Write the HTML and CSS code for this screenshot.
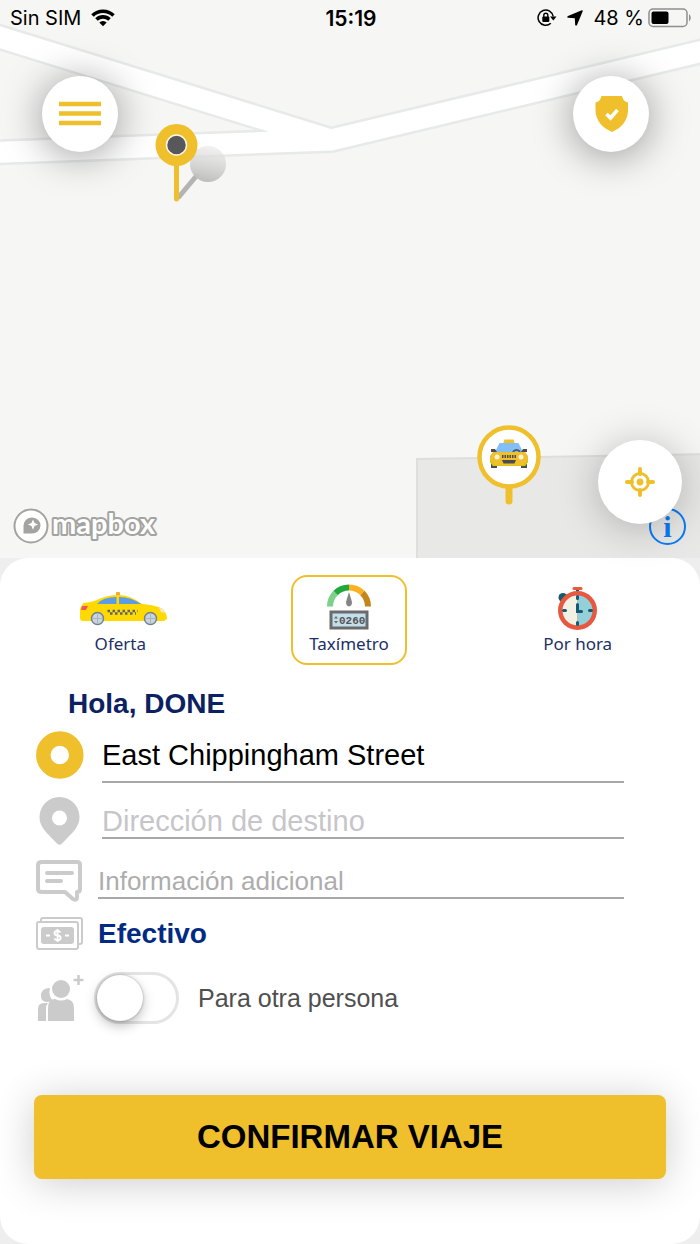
FILE: index.html
```html
<!DOCTYPE html>
<html lang="es">
<head>
    <meta charset="UTF-8">
    <meta name="viewport" content="width=device-width, initial-scale=1.0">
    <title>Confirmar viaje</title>
    <link rel="stylesheet" href="styles.css">
</head>
<body>
    <div class="app">
        <section class="map">
            <svg class="map-canvas" viewBox="0 0 700 558" preserveAspectRatio="xMidYMid slice" aria-hidden="true">
                <defs>
                    <linearGradient id="pinShadow" x1="0.6" y1="0" x2="0.4" y2="1">
                        <stop offset="0" stop-color="#e8e8e7" stop-opacity="0.6"/>
                        <stop offset="1" stop-color="#bdbdbd"/>
                    </linearGradient>
                </defs>
                <path d="M417 570V459L720 454V570Z" fill="#e8e8e7" stroke="#dedede" stroke-width="2"/>

                <!-- roads -->
                <g fill="none" stroke-linejoin="round">
                    <path d="M-20 153L331 140M-20 31L331 140L720 47" stroke="#e6eae8" stroke-width="26"/>
                    <path d="M-20 153L331 140M-20 31L331 140L720 47" stroke="#ffffff" stroke-width="21"/>
                </g>

                <!-- pickup pin -->
                <path d="M178 198L198 174" stroke="#b4b4b4" stroke-width="5"/>
                <circle cx="208" cy="164" r="18" fill="url(#pinShadow)"/>
                <path d="M176.500 160V199" stroke="#efbf2c" stroke-width="5" stroke-linecap="round"/>
                <circle cx="176.500" cy="145" r="21" fill="#efbf2c"/>
                <circle cx="176.500" cy="145" r="10" fill="#58585c" stroke="#fff8e6" stroke-width="1.500"/>

                <!-- taxi pin -->
                <path d="M509 486V501" stroke="#efbf2c" stroke-width="7" stroke-linecap="round"/>
                <circle cx="509" cy="457" r="29.500" fill="#fff" stroke="#efbf2c" stroke-width="4.500"/>
                <g transform="translate(490 438)">
                    <path d="M13 6L14.500 1.500H23.500L25 6Z" fill="#efbf2c"/>
                    <path d="M4 16L9.500 5H28.500L34 16Z" fill="#82bff7"/>
                    <path d="M23 14a4 4 0 0 1 7 0" fill="none" stroke="#46545f" stroke-width="1.800"/>
                    <path d="M1 11h4l2 3H1ZM37 11h-4l-2 3h6Z" fill="#4b4c52"/>
                    <path d="M1 21h6v9H1ZM31 21h6v9h-6Z" fill="#4b4c52"/>
                    <path d="M3 14H35L38 18V24L35 28H3L0 24V18Z" fill="#efbf2c"/>
                    <path d="M0 22L5 27H33L38 22V24L35 28H3L0 24Z" fill="#d6c60f"/>
                    <path d="M12 18.500H26" stroke="#4b4c52" stroke-width="3" stroke-dasharray="1.500 1"/>
                    <path d="M12 22H26L24.500 25.500H13.500Z" fill="#4b4c52"/>
                    <circle cx="7" cy="19" r="2.500" fill="#fff3dc"/>
                    <circle cx="31" cy="19" r="2.500" fill="#fff3dc"/>
                </g>
            </svg>

            <header class="status-bar">
                <div class="status-left">
                    <span>Sin SIM</span>
                    <svg width="24" height="18" viewBox="0 0 24 18">
                        <g fill="none" stroke="#000" stroke-width="3.600">
                            <path d="M1.500 6.500a15 15 0 0 1 21 0"/>
                            <path d="M5.500 10.500a9.300 9.300 0 0 1 13 0"/>
                        </g>
                        <path d="M8.300 13.500a5.300 5.300 0 0 1 7.400 0L12 17.200Z"/>
                    </svg>
                </div>
                <time class="status-time">15:19</time>
                <div class="status-right">
                    <svg width="20" height="18" viewBox="0 0 20 18">
                        <path d="M16.200 7.500a7.600 7.600 0 1 0-2.400 6.800" fill="none" stroke="#000" stroke-width="1.500"/>
                        <path d="M13 7.500h6.500l-3.200 4Z"/>
                        <rect x="5.300" y="7.500" width="7" height="5.500" rx="1"/>
                        <path d="M6.800 8V6.200a2 2 0 0 1 4 0V8" fill="none" stroke="#000" stroke-width="1.400"/>
                    </svg>
                    <svg width="16" height="16" viewBox="0 0 16 16"><path d="M14.800 0.300Q16 0 15.700 1.200L10 15Q9 16.500 8.200 15L7.800 8.200L1 7.800Q-0.500 7 1 6Z"/></svg>
                    <span>48 %</span>
                    <svg width="44" height="20" viewBox="0 0 44 20">
                        <rect x="1" y="1" width="38" height="17.500" rx="4" fill="none" stroke="#8e8e8c" stroke-width="1.500"/>
                        <rect x="3.500" y="3.500" width="17" height="12.500" rx="2"/>
                        <path d="M41 6q3.500 3.500 0 7.500Z" fill="#8e8e8c"/>
                    </svg>
                </div>
            </header>

            <div class="map-top">
                <button class="round-btn" type="button" aria-label="Menú">
                    <svg width="42" height="26" viewBox="0 0 42 26"><path d="M0 3h42M0 12.500h42M0 22h42" stroke="#efbf2c" stroke-width="4.500"/></svg>
                </button>
                <button class="round-btn" type="button" aria-label="Seguridad">
                    <svg width="34" height="36" viewBox="0 0 34 36">
                        <path d="M7.500 0H28Q29 5.500 34 6.500V14C34 25 27 32 18 36C9 32 1.500 25 1.500 14V6.500Q6.500 5.500 7.500 0Z" fill="#efbf2c"/>
                        <path d="M12.500 18L16.500 22L23.500 14" fill="none" stroke="#fff" stroke-width="3.600"/>
                    </svg>
                </button>
            </div>

            <div class="map-bottom">
                <svg class="mapbox-logo" width="160" height="46" viewBox="0 -8 160 46" role="img" aria-label="mapbox">
                    <circle cx="18" cy="19" r="16.500" fill="#fff" stroke="#a3a3a1" stroke-width="2"/>
                    <path d="M10.500 26.500V18.500a8.500 8 0 1 1 8 8Z" fill="#a3a3a1"/>
                    <path d="M20 12.500l1.500 3.600l3.600 1.500l-3.600 1.500l-1.500 3.600l-1.500-3.600l-3.600-1.500l3.600-1.500Z" fill="#fff"/>
                    <text class="mapbox-word" x="39" y="27">mapbox</text>
                </svg>
                <button class="info-btn" type="button" aria-label="Información del mapa">i</button>
                <button class="round-btn locate-btn" type="button" aria-label="Mi ubicación">
                    <svg width="30" height="30" viewBox="0 0 30 30" fill="none" stroke="#efbf2c">
                        <circle cx="15" cy="15" r="8.500" stroke-width="3"/>
                        <path d="M15 2v5M15 23v5M2 15h5M23 15h5" stroke-width="4" stroke-linecap="round"/>
                        <circle cx="15" cy="15" r="3.400" fill="#efbf2c" stroke="none"/>
                    </svg>
                </button>
            </div>
        </section>

        <main class="sheet">
            <nav class="services">
                <button class="service" type="button">
                    <svg width="96" height="46" viewBox="-8 0 96 46">
                        <rect x="36" y="8" width="4" height="5" rx="1" fill="#f6a735"/>
                        <path d="M0 34V25L3 19Q10 19 17 16Q27 11 39 11Q50 11 62 20Q76 21 83 25Q87 30 87 35L84 37H3Q0 37 0 34Z" fill="#ffd900"/>
                        <path d="M17 20Q23 13 36.500 13V20ZM39 13Q51 13 61 20H39Z" fill="#5c9ce6"/>
                        <path d="M2 22h6l-2 4H1Z" fill="#f0575a"/>
                        <path d="M79 24q5 0 6 5l-4-1Z" fill="#f3eaca"/>
                        <path d="M27.500 27H58M30 29.500H56" stroke="#5d6478" stroke-width="2.500" stroke-dasharray="2.500 2.500"/>
                        <g fill="#c9d5de" stroke="#74818c" stroke-width="1.500">
                            <circle cx="17.500" cy="34.500" r="6"/>
                            <circle cx="70.500" cy="34.500" r="6"/>
                        </g>
                        <path d="M17.500 30v9M13 34.500h9M70.500 30v9M66 34.500h9" stroke="#a9b6c0"/>
                    </svg>
                    <span>Oferta</span>
                </button>
                <button class="service active" type="button">
                    <svg width="46" height="46" viewBox="0 0 46 46">
                        <g fill="none" stroke-width="6">
                            <path d="M4 22.500A19 19 0 0 1 9.600 9" stroke="#7fd08a"/>
                            <path d="M9.600 9A19 19 0 0 1 23 3.500" stroke="#20a83a"/>
                            <path d="M23 3.500A19 19 0 0 1 36.400 9" stroke="#fdb022"/>
                            <path d="M36.400 9A19 19 0 0 1 42 22.500" stroke="#c28718"/>
                        </g>
                        <path d="M23 8L26 18Q26 22 23 22.500Q20 22 20 18Z" fill="#858585"/>
                        <rect x="5" y="28" width="36" height="16" fill="#c3dfec" stroke="#6b6b6b" stroke-width="3"/>
                        <path d="M8 34.500l2-2.500l2 2.500ZM8 37l2 2.500l2-2.500Z" fill="#6b6b6b"/>
                        <text class="meter-digits" x="13" y="40">0260</text>
                    </svg>
                    <span>Taxímetro</span>
                </button>
                <button class="service" type="button">
                    <svg width="44" height="46" viewBox="0 0 44 46">
                        <circle cx="7" cy="13.500" r="4.500" fill="#155b70"/>
                        <path d="M21.500 4v5" stroke="#155b70" stroke-width="3"/>
                        <path d="M18 4.500h7" stroke="#e85840" stroke-width="3" stroke-linecap="round"/>
                        <circle cx="21.500" cy="26.500" r="19.500" fill="#e85840"/>
                        <path d="M21.500 11.500a15 15 0 0 0 0 30Z" fill="#f3f0e4"/>
                        <path d="M21.500 11.500a15 15 0 0 1 0 30Z" fill="#93d0d9"/>
                        <path d="M21.500 12.500v2M21.500 38.500v2M7.500 26.500h2M33.500 26.500h2M21.500 20.500v7h4" fill="none" stroke="#155b70" stroke-width="3" stroke-linecap="round"/>
                    </svg>
                    <span>Por hora</span>
                </button>
            </nav>

            <form class="trip-form">
                <h1 class="greeting">Hola, DONE</h1>

                <div class="row row-origin">
                    <label class="row-icon" for="origin" aria-label="Origen">
                        <svg width="48" height="48" viewBox="0 0 48 48"><circle cx="23.800" cy="24" r="16.500" fill="#fff" stroke="#efbf2c" stroke-width="14.500"/></svg>
                    </label>
                    <input class="field address" id="origin" type="text" value="East Chippingham Street">
                </div>

                <div class="row row-destination">
                    <label class="row-icon" for="destination" aria-label="Destino">
                        <svg width="42" height="48" viewBox="0 0 42 48">
                            <path d="M20.500 0A20 20 0 0 1 40.500 20.500C40.500 30 33 36 23 46.500Q20.500 49 18 46.500C8 36 0.500 30 0.500 20.500A20 20 0 0 1 20.500 0Z" fill="#cbcbcb"/>
                            <circle cx="20.500" cy="21" r="7.500" fill="#fff"/>
                        </svg>
                    </label>
                    <input class="field address" id="destination" type="text" placeholder="Dirección de destino">
                </div>

                <div class="row row-notes">
                    <label class="row-icon" for="notes" aria-label="Información adicional">
                        <svg width="48" height="42" viewBox="0 0 48 42" fill="none" stroke="#cbcbcb" stroke-width="4" stroke-linecap="round" stroke-linejoin="round">
                            <path d="M6 2H41Q44 2 44 5V29Q44 32 41 32V37Q41 41 37 39L29 32H6Q2 32 2 29V5Q2 2 6 2Z"/>
                            <path d="M11 13h25M11 21h14"/>
                        </svg>
                    </label>
                    <input class="field" id="notes" type="text" placeholder="Información adicional">
                </div>

                <div class="row row-payment">
                    <span class="row-icon">
                        <svg width="48" height="34" viewBox="0 0 48 34">
                            <path d="M5 5V3Q5 1 7 1H44Q46 1 46 3V25Q46 27 44 27H42" fill="none" stroke="#cbcbcb" stroke-width="2"/>
                            <rect x="1" y="5" width="41" height="27" rx="2" fill="#fff" stroke="#cbcbcb" stroke-width="2"/>
                            <rect x="5" y="10" width="33" height="17" rx="3" fill="#cbcbcb"/>
                            <path d="M10 18.500h4M29 18.500h4" stroke="#fff" stroke-width="2"/>
                            <path d="M24.500 15.500q-1-1.500-3-1.500q-3 0-3 2.200q0 2 3 2.300q3.200.3 3.200 2.500q0 2.200-3.200 2.200q-2.200 0-3.200-1.600M21.500 12v13" fill="none" stroke="#fff" stroke-width="1.800"/>
                        </svg>
                    </span>
                    <button class="payment" type="button">Efectivo</button>
                </div>

                <div class="row row-other">
                    <span class="row-icon">
                        <svg width="48" height="48" viewBox="0 0 48 48" fill="#cbcbcb">
                            <path d="M12 28Q5 28 5 22Q5 14 14 14Q12 22 17 27Z"/>
                            <path d="M2 47V35Q2 29 8 29H12Q10 31 10 35V47Z"/>
                            <circle cx="25" cy="15" r="9"/>
                            <path d="M12 47V34Q12 25 19 25Q25 28 31 25Q38 26 38 34V47Z"/>
                            <path d="M42.500 1v10M37.500 6h10" stroke="#cbcbcb" stroke-width="2.500"/>
                        </svg>
                    </span>
                    <input class="toggle" id="other" type="checkbox" role="switch">
                    <label class="toggle-label" for="other">Para otra persona</label>
                </div>

                <button class="confirm" type="submit">CONFIRMAR VIAJE</button>
            </form>
        </main>
    </div>
</body>
</html>
```
FILE: styles.css
```css
* {
    box-sizing: border-box;
}
body {
    margin: 0;
    background: #eeeeee;
    color: #000;
    font-family: "Liberation Sans", Arial, sans-serif;
}
button, input {
    font-family: inherit;
    margin: 0;
    padding: 0;
    border: none;
    background: none;
}
button { cursor: pointer; }
svg { display: block; }
.app {
    display: flex;
    flex-direction: column;
    min-height: 100vh;
}

/* map */
.map {
    position: relative;
    display: flex;
    flex-direction: column;
    height: 558px;
    background: #f6f6f4;
}
.map-canvas {
    position: absolute;
    inset: 0;
    width: 100%;
    height: 100%;
}
.status-bar {
    position: relative;
    display: grid;
    grid-template-columns: 1fr auto 1fr;
    align-items: center;
    height: 36px;
    padding: 0 8px 0 10px;
    font-family: Inter, sans-serif;
    font-size: 20px;
}
.status-left, .status-right {
    display: flex;
    align-items: center;
    gap: 10px;
}
.status-right {
    justify-content: flex-end;
}
.status-right span { margin-right: -6px; }
.status-time {
    font-size: 21px;
    font-weight: 600;
}
.map-top {
    position: relative;
    display: flex;
    justify-content: space-between;
    padding: 40px 51px 0 42px;
}
.round-btn {
    display: flex;
    align-items: center;
    justify-content: center;
    width: 76px;
    height: 76px;
    border-radius: 50%;
    background: #fff;
    box-shadow: 0 4px 40px rgba(0, 0, 0, 0.4);
}
.map-bottom {
    position: relative;
    display: flex;
    align-items: flex-end;
    justify-content: space-between;
    margin-top: auto;
    padding: 0 18px 13px 13px;
}
.mapbox-word {
    font-family: Lato, sans-serif;
    font-size: 29px;
    font-weight: 700;
    fill: #fff;
    stroke: #a3a3a1;
    stroke-width: 4px;
    stroke-linejoin: round;
    paint-order: stroke;
}
.locate-btn {
    position: relative;
    width: 84px;
    height: 84px;
    margin-bottom: 21px;
    box-shadow: 0 4px 40px rgba(0, 0, 0, 0.25);
}
.info-btn {
    position: absolute;
    right: 14px;
    bottom: 13px;
    width: 37px;
    height: 37px;
    border: 2px solid #087cf7;
    border-radius: 50%;
    color: #087cf7;
    font-family: "Liberation Serif", serif;
    font-size: 30px;
    font-weight: 700;
    line-height: 30px;
}

/* bottom sheet */
.sheet {
    flex: 1;
    padding: 17px 0 65px;
    border-radius: 28px;
    background: #fff;
}
.services {
    display: grid;
    grid-template-columns: repeat(3, 1fr);
    justify-items: center;
    padding: 0 8px 0 6px;
}
.service {
    display: flex;
    flex-direction: column;
    align-items: center;
    justify-content: center;
    gap: 2px;
    width: 116px;
    height: 90px;
    border: 2px solid transparent;
    border-radius: 16px;
    color: #1c2f66;
    font-family: "Noto Sans", sans-serif;
    font-size: 17px;
    line-height: 24px;
}
.service.active { border-color: #efbf2c; }
.meter-digits {
    font-family: "Liberation Mono", monospace;
    font-size: 11px;
    font-weight: 700;
    fill: #555;
}
.trip-form {
    padding: 0 34px;
}
.greeting {
    margin: 23px 0 7px 34px;
    color: #0b2161;
    font-size: 28px;
    font-weight: 700;
    line-height: 32px;
}
.row {
    display: flex;
    align-items: center;
    gap: 8px;
    height: 48px;
    padding-right: 42px;
}
.row-icon {
    display: flex;
    flex: none;
    justify-content: center;
    width: 52px;
}
.row-origin { height: 56px; }
.row-destination { margin-top: 14px; }
.row-notes { margin-top: 12px; }
.row-payment { height: 36px; margin-top: 11px; }
.row-other { height: 52px; margin-top: 20px; }
.field {
    flex: 1;
    min-width: 0;
    height: 36px;
    margin-left: 4px;
    padding-top: 2px;
    border-bottom: 2px solid #a8a8a8;
    color: #000;
    font-size: 26px;
    outline: none;
}
.field::placeholder { color: #adadad; }
.field.address {
    margin-left: 8px;
    font-size: 29px;
}
.field.address::placeholder { color: #c6c6ca; }
.row-origin .field { height: 56px; }
.payment {
    margin-left: 4px;
    color: #012a83;
    font-size: 28px;
    font-weight: 700;
}
.toggle {
    appearance: none;
    flex: none;
    width: 85px;
    height: 52px;
    border: 3px solid #e4e4e4;
    border-radius: 26px;
    background: #fff;
    cursor: pointer;
}
.toggle::before {
    content: "";
    display: block;
    width: 46px;
    height: 46px;
    border-radius: 50%;
    background: #fff;
    box-shadow: 0 5px 12px rgba(0, 0, 0, 0.25), 0 0 3px rgba(0, 0, 0, 0.3);
}
.toggle:checked { background: #efbf2c; }
.toggle:checked::before { margin-left: auto; }
.toggle-label {
    margin-left: 11px;
    color: #4f4f4f;
    font-size: 25px;
}
.confirm {
    display: block;
    width: 100%;
    height: 84px;
    margin-top: 71px;
    border-radius: 8px;
    background: #efbf2c;
    box-shadow: 0 4px 40px rgba(0, 0, 0, 0.2);
    color: #000;
    font-size: 33px;
    font-weight: 700;
}
```
